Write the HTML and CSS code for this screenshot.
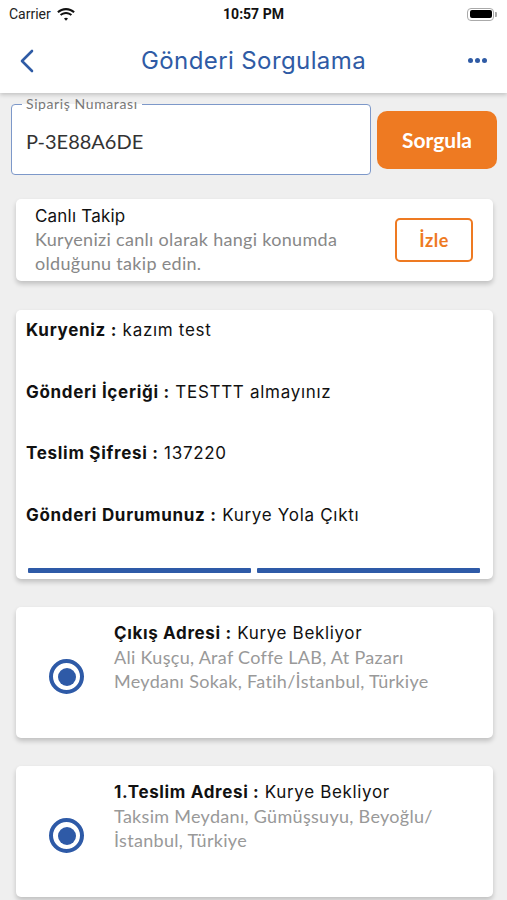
FILE: index.html
```html
<!doctype html>
<html>
  <head>
    <meta charset="utf-8" />
    <link rel="stylesheet" href="styles.css">
  </head>
  <body>
    <div class="top">
      <div class="status-bar">
        <div class="carrier">
          Carrier
          <svg class="wifi" width="18" height="13" viewBox="0 0 18 13">
            <path d="M9 2.2c2.9 0 5.5 1.1 7.4 2.9l1.4-1.5C15.5 1.4 12.4 0 9 0S2.5 1.4.2 3.6l1.4 1.5C3.5 3.3 6.1 2.2 9 2.2z" fill="#111"/>
            <path d="M9 6c1.8 0 3.4.7 4.7 1.8l1.4-1.5C13.5 4.8 11.4 3.9 9 3.9S4.5 4.8 2.9 6.3l1.4 1.5C5.6 6.7 7.2 6 9 6z" fill="#111"/>
            <path d="M9 9.7c.8 0 1.5.3 2 .8L9 12.7l-2-2.2c.5-.5 1.2-.8 2-.8z" fill="#111"/>
          </svg>
        </div>
        <div class="clock">10:57 PM</div>
        <div class="battery">
          <div class="battery-body"><div class="battery-fill"></div></div>
          <div class="battery-tip"></div>
        </div>
      </div>
      <div class="nav-bar">
        <svg class="back" width="16" height="24" viewBox="0 0 16 24">
          <path d="M13 2 3 12l10 10" fill="none" stroke="#2f5ba5" stroke-width="2.6" stroke-linecap="round" stroke-linejoin="round"/>
        </svg>
        <div class="nav-title">Gönderi Sorgulama</div>
        <div class="more"><span></span><span></span><span></span></div>
      </div>
    </div>

    <div class="content">
      <div class="search-row">
        <div class="order-field">
          <span class="order-legend">Sipariş Numarası</span>
          <span class="order-value">P-3E88A6DE</span>
        </div>
        <button class="query-btn">Sorgula</button>
      </div>

      <div class="card live-card">
        <div class="live-text">
          <div class="live-title">Canlı Takip</div>
          <div class="live-desc">Kuryenizi canlı olarak hangi konumda olduğunu takip edin.</div>
        </div>
        <button class="watch-btn">İzle</button>
      </div>

      <div class="card info-card">
        <div class="info-row"><b>Kuryeniz :</b> kazım test</div>
        <div class="info-row"><b>Gönderi İçeriği :</b> TESTTT almayınız</div>
        <div class="info-row"><b>Teslim Şifresi :</b> 137220</div>
        <div class="info-row"><b>Gönderi Durumunuz :</b> Kurye Yola Çıktı</div>
        <div class="progress">
          <div class="progress-step"></div>
          <div class="progress-step"></div>
        </div>
      </div>

      <div class="card address-card">
        <div class="radio"><div class="radio-dot"></div></div>
        <div class="address-text">
          <div class="address-title"><b>Çıkış Adresi :</b> Kurye Bekliyor</div>
          <div class="address-line">Ali Kuşçu, Araf Coffe LAB, At Pazarı Meydanı Sokak, Fatih/İstanbul, Türkiye</div>
        </div>
      </div>

      <div class="card address-card">
        <div class="radio"><div class="radio-dot"></div></div>
        <div class="address-text">
          <div class="address-title"><b>1.Teslim Adresi :</b> Kurye Bekliyor</div>
          <div class="address-line">Taksim Meydanı, Gümüşsuyu, Beyoğlu/ İstanbul, Türkiye</div>
        </div>
      </div>
    </div>
  </body>
</html>
```

FILE: styles.css
```css
* {
  margin: 0;
  padding: 0;
  box-sizing: border-box;
}

body {
  width: 507px;
  height: 900px;
  overflow: hidden;
  background: #efefef;
  font-family: Inter, Roboto, 'Liberation Sans', sans-serif;
  color: #111;
}

.top {
  background: white;
  box-shadow: 0 2px 4px rgba(0, 0, 0, 0.18);
  position: relative;
  z-index: 2;
}

.status-bar {
  height: 28px;
  display: flex;
  align-items: center;
  justify-content: space-between;
  padding: 0 10px 0 9px;
  position: relative;
  font-family: Roboto, sans-serif;
}

.carrier {
  font-size: 14px;
  display: flex;
  align-items: center;
  gap: 6px;
  color: #222;
}

.clock {
  position: absolute;
  left: 0;
  right: 0;
  text-align: center;
  font-size: 14px;
  font-weight: 700;
  color: #111;
}

.battery {
  display: flex;
  align-items: center;
  gap: 1px;
}

.battery-body {
  width: 27px;
  height: 13px;
  border: 1.5px solid #aaa;
  border-radius: 4px;
  padding: 1.5px;
}

.battery-fill {
  width: 100%;
  height: 100%;
  background: #000;
  border-radius: 2px;
}

.battery-tip {
  width: 2px;
  height: 5px;
  background: #aaa;
  border-radius: 0 1px 1px 0;
}

.nav-bar {
  height: 65px;
  display: flex;
  align-items: center;
  justify-content: space-between;
  padding: 0 20px 0 19px;
  position: relative;
}

.nav-title {
  position: absolute;
  left: 0;
  right: 0;
  text-align: center;
  font-size: 24px;
  letter-spacing: 0.4px;
  color: #2f5ba5;
  pointer-events: none;
}

.more {
  display: flex;
  gap: 2px;
}

.more span {
  width: 5px;
  height: 5px;
  border-radius: 50%;
  background: #2f5ba5;
}

.content {
  padding: 11px 10px 0 11px;
  display: flex;
  flex-direction: column;
}

.search-row {
  display: flex;
  align-items: center;
  gap: 6px;
}

.order-field {
  position: relative;
  width: 360px;
  height: 71px;
  border: 1.5px solid #7d98c9;
  border-radius: 4px;
  background: white;
  display: flex;
  align-items: center;
  padding-left: 14px;
}

.order-legend {
  position: absolute;
  top: -10px;
  left: 10px;
  padding: 0 4px;
  font-family: Lato, 'Noto Sans', sans-serif;
  font-size: 14px;
  letter-spacing: 0.6px;
  color: #777;
  background: linear-gradient(#efefef 50%, white 50%);
}

.order-value {
  font-family: Lato, 'Noto Sans', sans-serif;
  font-size: 20px;
  color: #333;
  padding-top: 2px;
}

.query-btn {
  width: 120px;
  height: 58px;
  border: none;
  border-radius: 10px;
  background: #ee7a22;
  color: white;
  font-family: Lato, 'Noto Sans', sans-serif;
  font-size: 21px;
  font-weight: 700;
}

.card {
  background: white;
  border-radius: 5px;
  box-shadow: 0 3px 5px rgba(0, 0, 0, 0.2);
  margin: 0 4px 0 5px;
}

.live-card {
  margin-top: 24px;
  height: 82px;
  display: flex;
  align-items: center;
  justify-content: space-between;
  padding: 0 20px 0 19px;
}

.live-title {
  font-size: 17px;
  letter-spacing: 0.2px;
  color: #111;
  margin-bottom: 1px;
}

.live-desc {
  width: 330px;
  font-family: Lato, 'Noto Sans', sans-serif;
  font-size: 18px;
  letter-spacing: 0.3px;
  line-height: 24px;
  color: #888;
}

.watch-btn {
  width: 78px;
  height: 44px;
  border: 2px solid #ee7a22;
  border-radius: 5px;
  background: white;
  color: #ee7a22;
  font-family: Lato, 'Noto Sans', sans-serif;
  font-size: 18px;
  letter-spacing: 0.5px;
  font-weight: 700;
}

.info-card {
  margin-top: 29px;
  height: 269px;
  padding: 8px 11px 0 10px;
  display: flex;
  flex-direction: column;
}

.info-row {
  font-size: 17px;
  letter-spacing: 0.7px;
  height: 61.5px;
  line-height: 24px;
  color: #111;
}

.info-row b {
  font-weight: 700;
}

.progress {
  display: flex;
  gap: 6px;
  margin: 4px 2px 0 2px;
}

.progress-step {
  flex: 1;
  height: 5px;
  background: #2e5aa7;
  border-radius: 1px;
}

.address-card {
  margin-top: 28px;
  height: 131px;
  display: flex;
  padding: 14px 16px 0 33px;
}

.radio {
  width: 35px;
  height: 35px;
  border: 4px solid #2e5aa7;
  border-radius: 50%;
  display: flex;
  align-items: center;
  justify-content: center;
  margin-top: 38px;
  flex-shrink: 0;
}

.radio-dot {
  width: 18px;
  height: 18px;
  background: #2e5aa7;
  border-radius: 50%;
}

.address-text {
  margin-left: 30px;
}

.address-title {
  font-size: 17px;
  letter-spacing: 0.65px;
  line-height: 24px;
  color: #111;
}

.address-line {
  width: 325px;
  font-family: Lato, 'Noto Sans', sans-serif;
  font-size: 18px;
  letter-spacing: 0.3px;
  line-height: 24px;
  color: #999;
}
```
